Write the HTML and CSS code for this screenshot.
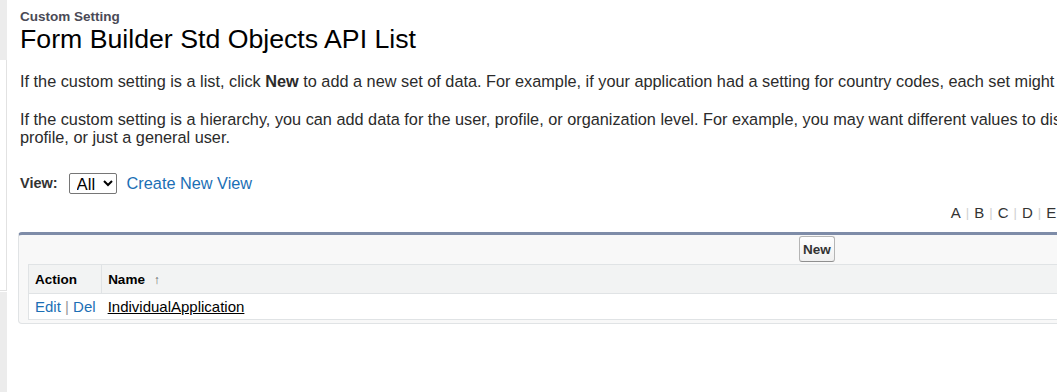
FILE: index.html
```html
<!DOCTYPE html>
<html lang="en">
<head>
    <meta charset="UTF-8">
    <title>Custom Setting: Form Builder Std Objects API List</title>
    <link rel="stylesheet" href="styles.css">
</head>
<body>
    <div class="page">
        <div class="sidebar">
            <div class="side-top"></div>
            <div class="side-mid"></div>
            <div class="side-bottom"></div>
        </div>
        <div class="content">
            <div class="page-type">Custom Setting</div>
            <h1 class="page-title">Form Builder Std Objects API List</h1>

            <p class="intro">If the custom setting is a list, click <b>New</b> to add a new set of data. For example, if your application had a setting for country codes, each set might include the country's name and dialing code.</p>
            <p class="intro">If the custom setting is a hierarchy, you can add data for the user, profile, or organization level. For example, you may want different values to display depending on whether a specific user is running the app, a specific profile, or just a general user.</p>

            <div class="view-bar">
                <label class="view-label" for="fcf">View:</label>
                <select id="fcf" class="view-select">
                    <option>All</option>
                </select>
                <a href="#" class="link">Create New View</a>
            </div>

            <div class="rolodex">
                <a href="#">A</a><span class="sep">|</span><a href="#">B</a><span class="sep">|</span><a href="#">C</a><span class="sep">|</span><a href="#">D</a><span class="sep">|</span><a href="#">E</a><span class="sep">|</span><a href="#">F</a><span class="sep">|</span><a href="#">G</a><span class="sep">|</span><a href="#">H</a><span class="sep">|</span><a href="#">I</a><span class="sep">|</span><a href="#">J</a><span class="sep">|</span><a href="#">K</a><span class="sep">|</span><a href="#">L</a><span class="sep">|</span><a href="#">M</a><span class="sep">|</span><a href="#">N</a><span class="sep">|</span><a href="#">O</a><span class="sep">|</span><a href="#">P</a><span class="sep">|</span><a href="#">Q</a><span class="sep">|</span><a href="#">R</a><span class="sep">|</span><a href="#">S</a><span class="sep">|</span><a href="#">T</a><span class="sep">|</span><a href="#">U</a><span class="sep">|</span><a href="#">V</a><span class="sep">|</span><a href="#">W</a><span class="sep">|</span><a href="#">X</a><span class="sep">|</span><a href="#">Y</a><span class="sep">|</span><a href="#">Z</a><span class="sep">|</span><a href="#">Other</a><span class="sep">|</span><a href="#" class="current">All</a>
            </div>

            <div class="list-box">
                <div class="list-buttons">
                    <button class="btn">New</button>
                </div>
                <table class="list">
                    <tr class="header-row">
                        <th class="col-action">Action</th>
                        <th class="col-name">Name <span class="sort">&#8593;</span></th>
                    </tr>
                    <tr class="data-row">
                        <td class="col-action"><a href="#" class="link">Edit</a> <span class="pipe">|</span> <a href="#" class="link">Del</a></td>
                        <td class="col-name"><a href="#" class="record">IndividualApplication</a></td>
                    </tr>
                </table>
            </div>
        </div>
    </div>
</body>
</html>
```

FILE: styles.css
```css
body {
    margin: 0;
    font-family: "Liberation Sans", Arial, sans-serif;
    font-size: 16.3px;
    color: #2b2b2b;
    background: #fff;
    overflow: hidden;
}
.page {
    display: flex;
    width: 1700px;
    height: 392px;
}

/* Left edge of the sidebar */
.sidebar {
    width: 7px;
    display: flex;
    flex-direction: column;
    flex-shrink: 0;
}
.side-top {
    height: 60px;
    background: #ececec;
}
.side-mid {
    height: 230px;
    background: #fff;
    border-right: 1px solid #e2e2e2;
    border-bottom: 1px solid #e2e2e2;
}
.side-bottom {
    flex: 1;
    background: #ececec;
    border-top: 1px solid #fff;
}

.content {
    flex: 1;
    padding: 10px 0 0 13px;
}
.page-type {
    font-size: 13.5px;
    font-weight: bold;
    color: #4a4a56;
    line-height: 14px;
}
.page-title {
    margin: 0;
    font-size: 26.7px;
    font-weight: normal;
    color: #000;
    line-height: 30px;
}
.intro {
    margin: 18px 0 0;
    line-height: 18px;
    width: 1585px;
}
.intro + .intro {
    margin-top: 20px;
}

.view-bar {
    display: flex;
    align-items: center;
    height: 22px;
    margin-top: 26px;
}
.view-label {
    font-weight: bold;
    font-size: 14.5px;
    color: #333;
    margin-right: 11px;
}
.view-select {
    font-family: "Liberation Sans", Arial, sans-serif;
    font-size: 16.7px;
    width: 48px;
    height: 21px;
    padding: 0 0 0 3px;
    border: 1px solid #767676;
    border-radius: 2px;
    background: #fff;
    color: #000;
    margin-right: 10px;
}
.link {
    color: #1b6fb5;
    text-decoration: none;
}

.rolodex {
    width: 1613px;
    margin: 10px 0 0 -2px;
    display: flex;
    justify-content: flex-end;
    align-items: center;
    font-size: 15px;
    line-height: 18px;
    white-space: nowrap;
}
.rolodex a {
    color: #333;
    text-decoration: none;
}
.rolodex .sep {
    color: #d0d0d0;
    margin: 0 5px;
    font-size: 13px;
}

.list-box {
    margin: 10px 0 0 -2px;
    width: 1586px;
    border: 1px solid #e0e3e5;
    border-top: 3px solid #7e8ca8;
    border-radius: 4px;
    background: #f8f8f8;
    padding: 0 9px 3px;
}
.list-buttons {
    display: flex;
    justify-content: center;
    padding: 1px 8px 2px 0;
}
.btn {
    font-family: "Liberation Sans", Arial, sans-serif;
    font-weight: bold;
    font-size: 13.5px;
    color: #333;
    height: 26px;
    padding: 0 3px;
    border: 1px solid #b5b5b5;
    border-bottom-color: #8f8f8f;
    border-radius: 3px;
    background: linear-gradient(#fff, #f0f0f0);
}
.list {
    border-collapse: collapse;
    width: 100%;
    background: #fff;
    border: 1px solid #e0e3e5;
}
.header-row th {
    background: #f2f3f3;
    text-align: left;
    font-size: 13.5px;
    color: #000;
    height: 27px;
    padding: 1px 6px 0;
    border-bottom: 1px solid #e0e3e5;
}
.header-row .col-action {
    width: 60px;
    border-right: 1px solid #e0e3e5;
}
.sort {
    color: #666;
    font-size: 12px;
    margin-left: 5px;
}
.data-row td {
    height: 25px;
    padding: 0 6px;
    font-size: 15px;
    white-space: nowrap;
}
.pipe {
    color: #999;
}
.record {
    color: #000;
    text-decoration: underline;
}
```
